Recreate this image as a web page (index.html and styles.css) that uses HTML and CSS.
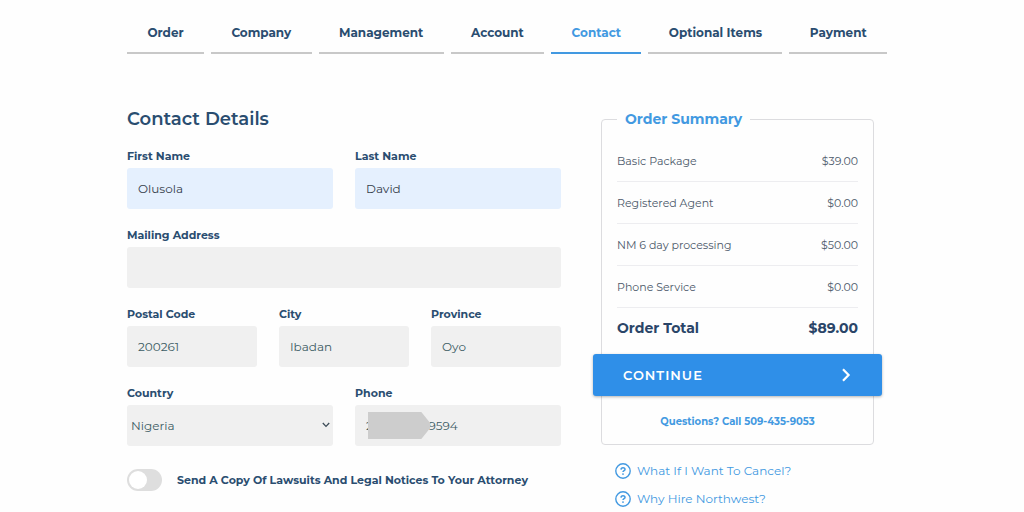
FILE: index.html
```html
<!DOCTYPE html>
<html lang="en">
<head>
    <meta charset="UTF-8">
    <meta name="viewport" content="width=device-width, initial-scale=1.0">
    <title>Contact Details</title>
    <link rel="stylesheet" href="styles.css">
</head>
<body>

    <div class="page">
        <nav class="steps">
            <a href="#order">Order</a>
            <a href="#company">Company</a>
            <a href="#management">Management</a>
            <a href="#account">Account</a>
            <a href="#contact" class="active">Contact</a>
            <a href="#optional">Optional Items</a>
            <a href="#payment">Payment</a>
        </nav>

        <form class="checkout">
            <div class="details">
                <h1>Contact Details</h1>

                <div class="fields">
                    <div class="field half">
                        <label for="firstName">First Name</label>
                        <input type="text" id="firstName" class="autofilled" value="Olusola">
                    </div>
                    <div class="field half">
                        <label for="lastName">Last Name</label>
                        <input type="text" id="lastName" class="autofilled" value="David">
                    </div>
                    <div class="field full">
                        <label for="address">Mailing Address</label>
                        <input type="text" id="address">
                    </div>
                    <div class="field">
                        <label for="postal">Postal Code</label>
                        <input type="text" id="postal" value="200261">
                    </div>
                    <div class="field">
                        <label for="city">City</label>
                        <input type="text" id="city" value="Ibadan">
                    </div>
                    <div class="field">
                        <label for="province">Province</label>
                        <input type="text" id="province" value="Oyo">
                    </div>
                    <div class="field half">
                        <label for="country">Country</label>
                        <div class="control">
                            <select id="country">
                                <option>Nigeria</option>
                            </select>
                            <svg class="arrow" width="8" height="6" viewBox="0 0 8 6" fill="none" stroke="currentColor" stroke-width="1.3">
                                <path d="M0.8 1 L4 4.4 L7.2 1"/>
                            </svg>
                        </div>
                    </div>
                    <div class="field half">
                        <label for="phone">Phone</label>
                        <div class="control">
                            <input type="tel" id="phone" value="2&emsp;&emsp;&emsp;&emsp;&ensp;&thinsp;9594">
                            <span class="phone-mask"></span>
                        </div>
                    </div>
                </div>

                <div class="toggle-row">
                    <input type="checkbox" id="copy" class="toggle">
                    <label for="copy">Send A Copy Of Lawsuits And Legal Notices To Your Attorney</label>
                </div>
            </div>

            <aside class="sidebar">
                <fieldset class="summary">
                    <legend>Order Summary</legend>
                    <table>
                        <tbody>
                            <tr><td>Basic Package</td><td>$39.00</td></tr>
                            <tr><td>Registered Agent</td><td>$0.00</td></tr>
                            <tr><td>NM 6 day processing</td><td>$50.00</td></tr>
                            <tr><td>Phone Service</td><td>$0.00</td></tr>
                        </tbody>
                        <tfoot>
                            <tr><th>Order Total</th><td>$89.00</td></tr>
                        </tfoot>
                    </table>
                    <button type="button" class="continue">
                        CONTINUE
                        <svg width="10" height="14" viewBox="0 0 10 14" fill="none" stroke="currentColor" stroke-width="2.2">
                            <path d="M2 1.2 L7.6 7 L2 12.8"/>
                        </svg>
                    </button>
                    <a href="tel:509-435-9053" class="call">Questions? Call 509-435-9053</a>
                </fieldset>

                <div class="help">
                    <a href="#cancel">
                        <svg width="16" height="16" viewBox="0 0 16 16" fill="none" stroke="currentColor">
                            <circle cx="8" cy="8" r="7.2" stroke-width="1.4"/>
                            <path d="M6 6.6 C6.1 4.2 10 4.3 10 6.4 C10 7.6 8 7.6 8 9" stroke-width="1.5"/>
                            <circle cx="8" cy="11.1" r="0.9" fill="currentColor" stroke="none"/>
                        </svg>
                        What If I Want To Cancel?
                    </a>
                    <a href="#why">
                        <svg width="16" height="16" viewBox="0 0 16 16" fill="none" stroke="currentColor">
                            <circle cx="8" cy="8" r="7.2" stroke-width="1.4"/>
                            <path d="M6 6.6 C6.1 4.2 10 4.3 10 6.4 C10 7.6 8 7.6 8 9" stroke-width="1.5"/>
                            <circle cx="8" cy="11.1" r="0.9" fill="currentColor" stroke="none"/>
                        </svg>
                        Why Hire Northwest?
                    </a>
                </div>
            </aside>
        </form>
    </div>

</body>
</html>
```
FILE: styles.css
```css
* {
    box-sizing: border-box;
}

body {
    margin: 0;
    background-color: #fefefe;
    color: #2a4d70;
    font-family: Montserrat, Inter, sans-serif;
    font-size: 11px;
    line-height: 16px;
}

a {
    color: #4299e1;
    text-decoration: none;
}

.page {
    padding: 23px 137px 0 127px;
}

/* Step navigation */
.steps {
    display: flex;
    gap: 7px;
    margin-bottom: 53px;
}

.steps a {
    flex: 1 1 auto;
    padding-bottom: 9px;
    border-bottom: 2px solid #c8c8c8;
    color: #2a4d70;
    font-size: 12px;
    font-weight: 700;
    line-height: 20px;
    text-align: center;
}

.steps a.active {
    color: #4299e1;
    border-color: #4299e1;
}

.checkout {
    display: grid;
    grid-template-columns: 434fr 286fr;
    gap: 40px;
}

h1 {
    margin: 0 0 17px;
    font-size: 18px;
    font-weight: 600;
    line-height: 24px;
}

/* Form fields */
.fields {
    display: grid;
    grid-template-columns: repeat(6, 1fr);
    gap: 18px 22px;
}

.field {
    display: flex;
    flex-direction: column;
    gap: 4px;
    grid-column: span 2;
    min-width: 0;
}

.field.half {
    grid-column: span 3;
}

.field.full {
    grid-column: span 6;
}

label {
    font-weight: 700;
}

.field input,
.field select {
    display: block;
    width: 100%;
    height: 41px;
    padding: 0 11px 1px;
    border: none;
    border-radius: 3px;
    background-color: #f0f0f0;
    color: #3c5c64;
    font-family: inherit;
    font-size: 12px;
}

.field select {
    appearance: none;
    padding: 0 4px 1px;
}

.field input.autofilled {
    background-color: #e5f0fe;
    color: #36404c;
}

.control {
    position: relative;
}

.arrow {
    position: absolute;
    top: 17px;
    right: 3px;
    color: #3c4c58;
    pointer-events: none;
}

/* Covers the private part of the number */
.phone-mask {
    position: absolute;
    top: 7px;
    left: 13px;
    width: 62px;
    height: 27px;
    background-color: #cdcdcd;
    clip-path: polygon(0 0, 86% 0, 100% 40%, 100% 60%, 86% 100%, 0 100%);
}

.toggle-row {
    display: flex;
    align-items: center;
    gap: 15px;
    margin-top: 23px;
}

.toggle {
    appearance: none;
    display: flex;
    flex-shrink: 0;
    width: 35px;
    height: 22px;
    margin: 0;
    padding: 2px;
    border-radius: 11px;
    background-color: #dedede;
}

.toggle::before {
    content: "";
    width: 18px;
    height: 18px;
    border-radius: 50%;
    background-color: #fff;
}

.toggle:checked {
    justify-content: flex-end;
    background-color: #4299e1;
}

/* Order summary */
.sidebar {
    padding-right: 13px;
}

.summary {
    min-width: 0;
    margin: 0;
    padding: 9px 15px 14px;
    border: 1px solid #dcdcdf;
    border-radius: 4px;
}

.summary legend {
    padding: 0 8px;
    color: #4299e1;
    font-size: 14px;
    font-weight: 700;
    line-height: 24px;
}

.summary table {
    width: 100%;
    border-spacing: 0;
}

.summary td,
.summary th {
    height: 42px;
    padding: 0;
    text-align: left;
}

.summary tbody td {
    border-bottom: 1px solid #ededf0;
    color: #4c596a;
}

.summary td:last-child {
    text-align: right;
}

.summary tfoot th,
.summary tfoot td {
    height: 40px;
    color: #2a4568;
    font-size: 14px;
    font-weight: 700;
}

.continue {
    display: flex;
    align-items: center;
    justify-content: space-between;
    width: calc(100% + 48px);
    height: 42px;
    margin: 6px -24px 18px;
    padding: 0 31px 0 30px;
    border: none;
    border-radius: 3px;
    background-color: #2f8fe8;
    box-shadow: 0 1px 3px rgba(0, 0, 0, 0.3);
    color: #fff;
    font-family: inherit;
    font-size: 13px;
    font-weight: 600;
    letter-spacing: 1px;
    cursor: pointer;
}

.call {
    display: block;
    font-size: 10px;
    font-weight: 700;
    text-align: center;
}

.help {
    display: flex;
    flex-direction: column;
    gap: 12px;
    padding: 18px 14px 0;
}

.help a {
    display: flex;
    align-items: center;
    gap: 6px;
    font-size: 12px;
}
```
